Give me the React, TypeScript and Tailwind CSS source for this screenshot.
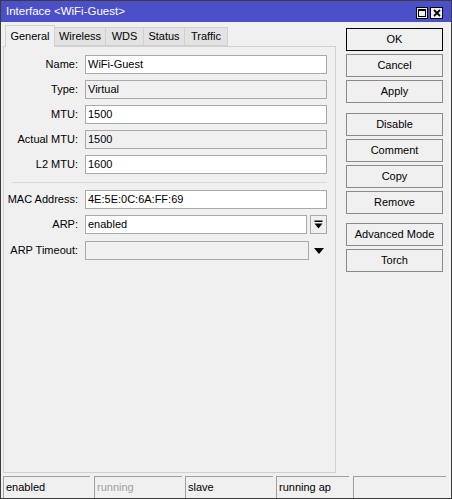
import React from "react";

type Field = {
  label: string;
  value?: string;
  readOnly?: boolean;
  width?: string;
};

const topFields: Field[] = [
  { label: "Name:", value: "WiFi-Guest" },
  { label: "Type:", value: "Virtual", readOnly: true },
  { label: "MTU:", value: "1500" },
  { label: "Actual MTU:", value: "1500", readOnly: true },
  { label: "L2 MTU:", value: "1600" },
];

const statusCells = [
  { text: "enabled", w: "w-[87px]", ml: "ml-0", dim: false },
  { text: "running", w: "w-[88px]", ml: "ml-[4px]", dim: true },
  { text: "slave", w: "w-[88px]", ml: "ml-[3px]", dim: false },
  { text: "running ap", w: "w-[73px]", ml: "ml-[3px]", dim: false },
  { text: "", w: "w-[93px]", ml: "ml-[4px]", dim: false },
];

function Row({ label, children }: { label: string; children: React.ReactNode }) {
  return (
    <div className="flex items-center h-[19px]">
      <div className="w-[74px] text-right whitespace-nowrap">{label}</div>
      <div className="ml-[7px] flex items-center">{children}</div>
    </div>
  );
}

function Box({ value, readOnly, width = "w-[242px]" }: Field) {
  return (
    <div
      className={`${width} h-[19px] border border-[#a9a9a9] pl-[2px] flex items-center leading-none ${
        readOnly ? "bg-[#f0f0f0]" : "bg-white"
      }`}
    >
      {value}
    </div>
  );
}

function Btn({ label, primary, className = "" }: { label: string; primary?: boolean; className?: string }) {
  return (
    <button
      type="button"
      className={`w-[97px] h-[23px] border bg-[#f0f0f0] flex items-center justify-center ${
        primary ? "border-black" : "border-[#8a8a8a]"
      } ${className}`}
    >
      {label}
    </button>
  );
}

export default function App() {
  return (
    <div
      className="w-[452px] h-[499px] flex flex-col border border-[#3c3c3c] bg-[#f0f0f0] text-black text-[11px]"
      style={{ fontFamily: '"Liberation Sans", Arial, sans-serif' }}
    >
      {/* title bar */}
      <div className="h-[21px] bg-[#4b50c8] flex items-center pl-[5px] pr-[8px] text-white text-[11.5px]">
        <span className="flex-1">Interface &lt;WiFi-Guest&gt;</span>
        <div className="flex gap-[2px] mt-[2px]">
          <div className="w-[12px] h-[12px] bg-[#f0f0f0] border border-black flex items-center justify-center">
            <div className="w-[8px] h-[8px] border border-black border-t-2" />
          </div>
          <div className="w-[13px] h-[12px] bg-[#f0f0f0] border border-black flex items-center justify-center">
            <svg width="8" height="8" viewBox="0 0 8 8">
              <path d="M1 1 L7 7 M7 1 L1 7" stroke="black" strokeWidth="1.8" />
            </svg>
          </div>
        </div>
      </div>

      <div className="flex flex-1 min-h-0">
        {/* left column */}
        <div className="flex flex-col pl-[2px] pt-[3px] w-[335px]">
          <div className="flex items-end h-[21px] pl-[2px]">
            <div className="h-[22px] -mb-px relative z-10 border border-b-0 border-[#d0d0d0] bg-[#f0f0f0] flex items-center justify-center w-[50px]">
              General
            </div>
            {["Wireless", "WDS", "Status", "Traffic"].map((t, i) => (
              <div
                key={t}
                className={`h-[19px] border border-l-0 border-[#d0d0d0] bg-[#e3e3e3] flex items-center justify-center ${
                  ["w-[51px]", "w-[38px]", "w-[41px]", "w-[43px]"][i]
                }`}
              >
                {t}
              </div>
            ))}
          </div>

          <div className="flex-1 border border-[#d0d0d0] flex flex-col pt-[8px]">
            <div className="flex flex-col gap-[6px]">
              {topFields.map((f) => (
                <Row key={f.label} label={f.label}>
                  <Box {...f} />
                </Row>
              ))}
            </div>

            <div className="h-px bg-[#d8d8d8] ml-[8px] w-[315px] mt-[8px] mb-[7px]" />

            <div className="flex flex-col gap-[6px]">
              <Row label="MAC Address:">
                <Box label="" value="4E:5E:0C:6A:FF:69" />
              </Row>
              <Row label="ARP:">
                <Box label="" value="enabled" width="w-[222px]" />
                <div className="ml-[3px] w-[17px] h-[19px] border border-[#a9a9a9] bg-[#f0f0f0] flex items-center justify-center">
                  <svg width="9" height="9" viewBox="0 0 9 9">
                    <rect x="0.5" y="0.5" width="8" height="1.5" fill="black" />
                    <path d="M0.5 3.5 H8.5 L4.5 8.5 Z" fill="black" />
                  </svg>
                </div>
              </Row>
              <div className="mt-px">
                <Row label="ARP Timeout:">
                  <Box label="" value="" readOnly width="w-[224px]" />
                  <div className="w-[18px] flex items-center justify-center">
                    <svg width="10" height="6" viewBox="0 0 10 6" className="ml-[2px]">
                      <path d="M0 0 H10 L5 6 Z" fill="black" />
                    </svg>
                  </div>
                </Row>
              </div>
            </div>
          </div>
        </div>

        {/* right column */}
        <div className="flex flex-col ml-[10px] pt-[6px]">
          <div className="flex flex-col gap-[3px]">
            <Btn label="OK" primary />
            <Btn label="Cancel" />
            <Btn label="Apply" />
          </div>
          <div className="flex flex-col gap-[3px] mt-[10px]">
            <Btn label="Disable" />
            <Btn label="Comment" />
            <Btn label="Copy" />
            <Btn label="Remove" />
          </div>
          <div className="flex flex-col gap-[3px] mt-[9px]">
            <Btn label="Advanced Mode" />
            <Btn label="Torch" />
          </div>
        </div>
      </div>

      {/* status bar */}
      <div className="flex pl-[2px] mt-[3px] h-[22px]">
        {statusCells.map((c, i) => (
          <div
            key={i}
            className={`${c.w} ${c.ml} h-[22px] border-t border-l border-[#a0a0a0] pl-[2px] flex items-center ${
              c.dim ? "text-[#a0a0a0]" : ""
            }`}
          >
            {c.text}
          </div>
        ))}
      </div>
    </div>
  );
}
